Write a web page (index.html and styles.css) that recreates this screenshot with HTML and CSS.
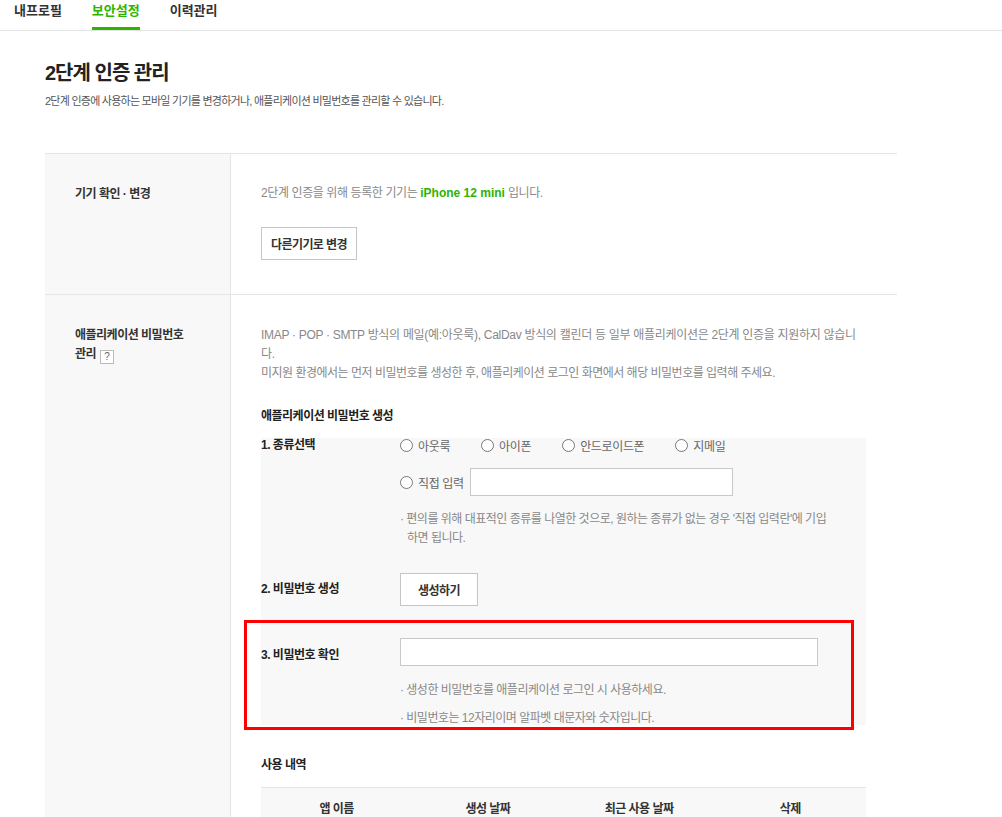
FILE: index.html
```html
<!DOCTYPE html>
<html lang="ko">
<head>
<meta charset="utf-8">
<title>보안설정</title>
<link rel="stylesheet" href="styles.css">
</head>
<body>
<nav class="tabs">
  <a class="tab">내프로필</a>
  <a class="tab active">보안설정</a>
  <a class="tab">이력관리</a>
</nav>
<main class="page">
  <h1 class="title">2단계 인증 관리</h1>
  <p class="subtitle">2단계 인증에 사용하는 모바일 기기를 변경하거나, 애플리케이션 비밀번호를 관리할 수 있습니다.</p>
  <div class="sheet">
    <section class="row row-device">
      <div class="row-head">기기 확인 · 변경</div>
      <div class="row-body">
        <p class="desc">2단계 인증을 위해 등록한 기기는 <strong class="device">iPhone 12 mini</strong> 입니다.</p>
        <button class="btn btn-device">다른기기로 변경</button>
      </div>
    </section>
    <section class="row row-app">
      <div class="row-head">애플리케이션 비밀번호<br>관리 <span class="help">?</span></div>
      <div class="row-body">
        <p class="desc desc-wide">IMAP · POP · SMTP 방식의 메일(예:아웃룩), CalDav 방식의 캘린더 등 일부 애플리케이션은 2단계 인증을 지원하지 않습니다.<br><span class="desc-tight">미지원 환경에서는 먼저 비밀번호를 생성한 후, 애플리케이션 로그인 화면에서 해당 비밀번호를 입력해 주세요.</span></p>
        <h3 class="sub-head">애플리케이션 비밀번호 생성</h3>
        <div class="gen-box">
          <div class="gen-row gen-kind">
            <div class="gen-label">1. 종류선택</div>
            <div class="gen-field">
              <div class="radios">
                <label class="radio"><span class="dot"></span>아웃룩</label>
                <label class="radio"><span class="dot"></span>아이폰</label>
                <label class="radio"><span class="dot"></span>안드로이드폰</label>
                <label class="radio"><span class="dot"></span>지메일</label>
              </div>
              <div class="radios radios-custom">
                <label class="radio radio-tight"><span class="dot"></span>직접 입력</label>
                <input class="text-input input-custom" type="text">
              </div>
              <p class="note note-wrap">· 편의를 위해 대표적인 종류를 나열한 것으로, 원하는 종류가 없는 경우 '직접 입력란'에 기입하면 됩니다.</p>
            </div>
          </div>
          <div class="gen-row gen-make">
            <div class="gen-label">2. 비밀번호 생성</div>
            <div class="gen-field">
              <button class="btn btn-make">생성하기</button>
            </div>
          </div>
          <div class="gen-row gen-check">
            <div class="gen-label">3. 비밀번호 확인</div>
            <div class="gen-field">
              <input class="text-input input-check" type="text">
              <p class="note note-first">· 생성한 비밀번호를 애플리케이션 로그인 시 사용하세요.</p>
              <p class="note note-second">· 비밀번호는 12자리이며 알파벳 대문자와 숫자입니다.</p>
            </div>
          </div>
          <div class="highlight"></div>
        </div>
        <h3 class="sub-head sub-history">사용 내역</h3>
        <table class="history">
          <thead>
            <tr><th>앱 이름</th><th>생성 날짜</th><th>최근 사용 날짜</th><th>삭제</th></tr>
          </thead>
        </table>
      </div>
    </section>
  </div>
</main>
</body>
</html>
```
FILE: styles.css
```css
* { box-sizing: border-box; }
html, body { margin: 0; padding: 0; background: #fff; }
body {
  font-family: "Liberation Sans", "Noto Sans CJK KR", sans-serif;
  color: #333;
  overflow: hidden;
  height: 817px;
}
p, h1, h3 { margin: 0; }

.tabs {
  display: flex;
  height: 31px;
  border-bottom: 1px solid #e5e5e5;
  padding-left: 14px;
  gap: 30px;
}
.tab {
  display: block;
  font-size: 13px;
  font-weight: 700;
  color: #333;
  line-height: 22px;
  letter-spacing: 0;
  height: 30px;
}
.tab.active {
  color: #2db400;
  border-bottom: 3px solid #2db400;
}

.page { padding: 0 105px 0 45px; }
.title {
  margin-top: 27px;
  font-size: 20px;
  line-height: 30px;
  font-weight: 700;
  color: #222;
  letter-spacing: -1px;
}
.subtitle {
  margin-top: 5px;
  font-size: 11px;
  line-height: 16px;
  color: #555;
  letter-spacing: -0.75px;
}

.sheet {
  margin-top: 44px;
  border-top: 1px solid #e5e5e5;
}
.row {
  display: grid;
  grid-template-columns: 186px 1fr;
  border-bottom: 1px solid #e5e5e5;
}
.row-head {
  background: #f8f8f8;
  border-right: 1px solid #e5e5e5;
  padding: 31px 0 0 30px;
  font-size: 12px;
  line-height: 19px;
  font-weight: 700;
  color: #333;
  letter-spacing: -0.5px;
}
.row-body { padding: 31px 0 32px 30px; }
.row-device .row-head { padding-top: 31px; }
.row-device .row-body { padding: 30px 0 34px 30px; }
.desc {
  font-size: 12px;
  line-height: 19px;
  color: #888;
  letter-spacing: -0.4px;
  max-width: 605px;
}
.desc-wide { letter-spacing: -0.3px; max-width: 600px; }
.desc-tight { letter-spacing: -0.5px; }
.device { color: #2db400; font-weight: 700; letter-spacing: 0; }
.btn {
  display: block;
  background: #fff;
  border: 1px solid #c5c5c5;
  font-family: inherit;
  font-size: 12px;
  font-weight: 700;
  color: #333;
  letter-spacing: -0.6px;
  height: 33px;
  padding: 0;
}
.btn-device { margin-top: 24px; width: 96px; }

.help {
  display: inline-block;
  width: 14px;
  height: 14px;
  border: 1px solid #bbb;
  background: #fff;
  font-size: 10px;
  line-height: 12px;
  text-align: center;
  color: #666;
  font-weight: 400;
  vertical-align: -2px;
  letter-spacing: 0;
  margin-left: 1px;
}

.sub-head {
  margin-top: 24px;
  font-size: 12px;
  line-height: 18px;
  font-weight: 700;
  color: #222;
  letter-spacing: -0.5px;
}

.gen-box {
  position: relative;
  margin-top: 13px;
  width: 605px;
  background: #f8f8f8;
  padding-bottom: 2px;
}
.gen-row {
  display: grid;
  grid-template-columns: 139px 1fr;
}
.gen-label {
  font-size: 12px;
  font-weight: 700;
  color: #222;
  letter-spacing: -0.5px;
  line-height: 18px;
}
.gen-kind .gen-label { line-height: 14px; }
.radios { display: flex; align-items: center; height: 14px; }
.radio {
  display: flex;
  align-items: center;
  gap: 5px;
  font-size: 12px;
  color: #666;
  letter-spacing: -0.35px;
  margin-right: 31px;
  white-space: nowrap;
}
.radio-tight { margin-right: 6px; }
.dot {
  width: 13px;
  height: 13px;
  border: 1px solid #777;
  border-radius: 50%;
  background: #fff;
  flex: none;
}
.radios-custom { margin-top: 16px; height: 28px; }
.text-input {
  display: block;
  height: 28px;
  border: 1px solid #c8c8c8;
  background: #fff;
  padding: 0;
  margin: 0;
}
.input-custom { width: 263px; }
.note {
  font-size: 12px;
  line-height: 19px;
  color: #888;
  letter-spacing: -0.5px;
  padding-left: 7px;
  text-indent: -7px;
}
.note-wrap { max-width: 428px; }
.gen-kind .note { margin-top: 14px; }
.gen-make { margin-top: 25px; }
.gen-make .gen-label { padding-top: 7px; }
.btn-make { width: 78px; height: 33px; }
.gen-check { margin-top: 32px; }
.gen-check .gen-label { padding-top: 8px; }
.input-check { width: 418px; }
.note-first { margin-top: 15px; }
.note-second { margin-top: 13px; line-height: 10px; }

.highlight {
  position: absolute;
  left: -17px;
  top: 182px;
  width: 610px;
  height: 110px;
  border: 3px solid #f00;
  pointer-events: none;
}

.sub-history { margin-top: 31px; }
.history {
  margin-top: 13px;
  width: 605px;
  border-collapse: collapse;
  table-layout: fixed;
}
.history th {
  background: #f8f8f8;
  border-top: 1px solid #e5e5e5;
  font-size: 12px;
  font-weight: 700;
  color: #333;
  letter-spacing: -0.5px;
  height: 40px;
  padding-top: 0;
}
```
